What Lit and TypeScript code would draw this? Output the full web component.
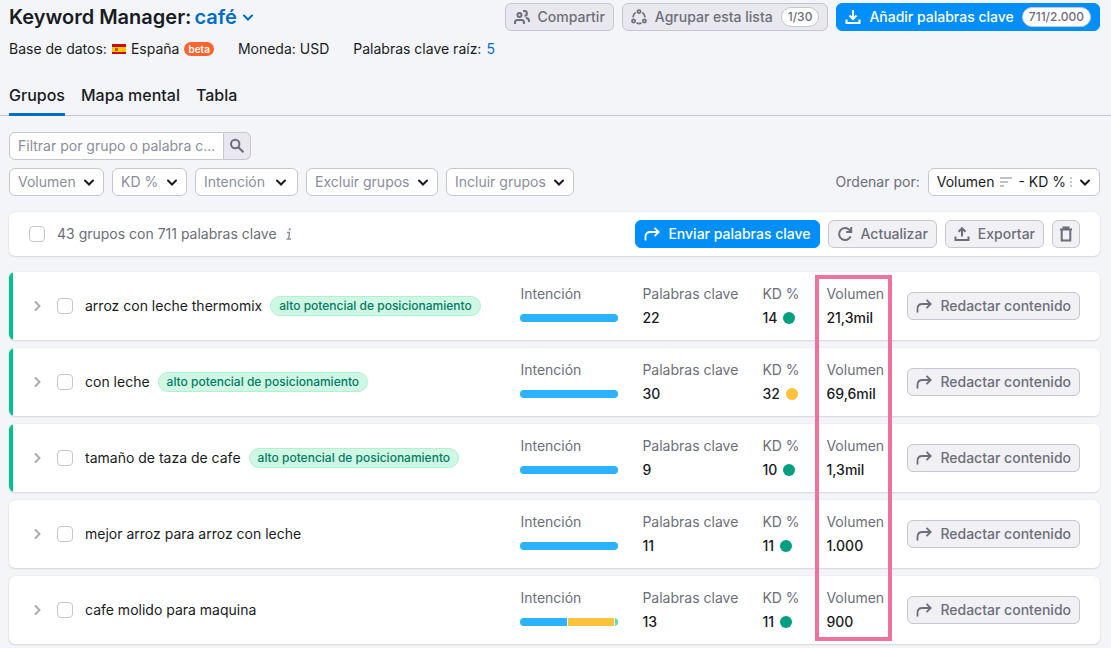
import { LitElement, html, css, svg, nothing } from "lit";
import { customElement, property } from "lit/decorators.js";
import { styleMap } from "lit/directives/style-map.js";

const icons: Record<string, unknown> = {
  share: svg`
    <circle cx="5.500" cy="6" r="2" stroke-width="2"/>
    <path d="M1 15v-1.500c0-1.500 1-2.500 2.500-2.500h4c1.500 0 2.500 1 2.500 2.500V15" stroke-width="2"/>
    <path d="M9 2h1.500a2.300 2.300 0 0 1 0 4.800M11.800 9c2 0 3.200 1.200 3.200 3v1" stroke-width="2"/>`,
  cluster: svg`
    <circle cx="8" cy="2.600" r="1.600" stroke-width="1.700"/>
    <circle cx="2.600" cy="12" r="1.600" stroke-width="1.700"/>
    <circle cx="13.400" cy="12" r="1.600" stroke-width="1.700"/>
    <path d="M4.800 3.400A6 6 0 0 0 2 8.200M11.200 3.400A6 6 0 0 1 14 8.200M5.500 14a6 6 0 0 0 5 0" stroke-width="1.700"/>`,
  download: svg`<path d="M8 1v8.700M4.500 6.500 8 10l3.500-3.500M1.500 10.500V14h13v-3.500" stroke-width="2"/>`,
  upload: svg`<path d="M8 10.500V2.500M4.500 5.700 8 2.200l3.500 3.500M1.500 10.500V14h13v-3.500" stroke-width="2"/>`,
  forward: svg`<path d="M1.500 14.500V11c0-3 2-5 5-5h8M10.500 1.800 14.700 6l-4.200 4.200" stroke-width="1.800"/>`,
  refresh: svg`<path d="M13.600 10.400A6 6 0 1 1 12.400 3.900L14 5.600M14.200 1v5h-5" stroke-width="2"/>`,
  trash: svg`<path d="M2 3.500h12M5.500 3V1.500h5V3M3.700 4v10.500h8.600V4" stroke-width="2"/>`,
  search: svg`<circle cx="6.200" cy="6" r="4.200" stroke-width="2"/><path d="m9.300 9.200 5.200 5" stroke-width="2.200"/>`,
  down: svg`<path d="m4 6.500 4 4 4-4" stroke-width="2" stroke-linecap="round"/>`,
  right: svg`<path d="m6.500 4 4 4-4 4" stroke-width="2" stroke-linecap="round"/>`,
  info: svg`<path d="M6 6.500h2.500L7.500 13M5.500 13H10" stroke-width="1.400"/><circle cx="8.700" cy="3.300" r="1.100" fill="currentColor" stroke="none"/>`,
  sortDesc: svg`<path d="M2 4h12M2 8h8M2 12h4" stroke-width="1.600"/>`,
};

@customElement("ui-icon")
export class UiIcon extends LitElement {
  @property() name = "";

  static styles = css`
    :host { display: inline-flex; flex: none; width: 16px; height: 16px; }
    .glyph { display: block; fill: none; stroke: currentColor; }
  `;

  render() {
    return html`<svg class="glyph" width="16" height="16" viewBox="0 0 16 16" aria-hidden="true">${icons[this.name]}</svg>`;
  }
}

const base = css`
  * { box-sizing: border-box; }
  button, input, select { font: inherit; color: inherit; margin: 0; }
  .btn {
    display: inline-flex; align-items: center; gap: 8px;
    height: 28px; padding: 0 8px;
    border: 1px solid #c4c7cf; border-radius: 6px;
    background: #f1f1f5; color: #6c6e79;
    font-size: 14px; line-height: 20px; font-weight: 500; white-space: nowrap;
  }
  .btn.primary { background: #008ff8; border-color: #008ff8; color: #fff; }
  .btn.muted { background: #e8e8ee; }
  .btn.square { width: 28px; padding: 0; justify-content: center; }
  .count {
    height: 20px; padding: 0 6px; border-radius: 10px;
    border: 1px solid #c4c7cf; background: #fff; color: #6c6e79;
    font-size: 12px; line-height: 18px; font-weight: 500;
  }
  .card {
    background: #fff; border-radius: 6px;
    box-shadow: 0 0 1px rgba(25, 27, 35, 0.16), 0 1px 2px rgba(25, 27, 35, 0.12);
  }
  .check {
    appearance: none; flex: none; width: 16px; height: 16px;
    border: 1px solid #c4c7cf; border-radius: 4px; background: #fff;
  }
`;

type Segment = { color: string; share: number };
type Group = { name: string; high: boolean; words: string; kd: string; dot: string; volume: string; intent: Segment[] };

const BLUE = "#2bb3ff";
const GREEN = "#009f81";
const AMBER = "#fdc23c";
const full: Segment[] = [{ color: BLUE, share: 100 }];

const groups: Group[] = [
  { name: "arroz con leche thermomix", high: true, words: "22", kd: "14", dot: GREEN, volume: "21,3mil", intent: full },
  { name: "con leche", high: true, words: "30", kd: "32", dot: AMBER, volume: "69,6mil", intent: full },
  { name: "tamaño de taza de cafe", high: true, words: "9", kd: "10", dot: GREEN, volume: "1,3mil", intent: full },
  { name: "mejor arroz para arroz con leche", high: false, words: "11", kd: "11", dot: GREEN, volume: "1.000", intent: full },
  {
    name: "cafe molido para maquina", high: false, words: "13", kd: "11", dot: GREEN, volume: "900",
    intent: [{ color: BLUE, share: 48 }, { color: AMBER, share: 48 }, { color: "#59ddaa", share: 4 }],
  },
];

@customElement("group-row")
export class GroupRow extends LitElement {
  @property({ attribute: false }) group!: Group;

  static styles = [base, css`
    :host { display: block; }
    .row {
      display: grid; grid-template-columns: minmax(0, 1fr) 98px 96px 40px 57px auto;
      column-gap: 24px; align-items: center;
      min-height: 68px; padding: 0 20px;
    }
    .row.high { background: linear-gradient(to right, #00c192 4px, #fff 4px); }
    .lead { display: flex; align-items: center; gap: 12px; min-width: 0; }
    .toggle { display: flex; padding: 0; border: 0; background: none; color: #a9abb6; }
    .title { display: flex; align-items: center; gap: 8px; white-space: nowrap; }
    .tag {
      height: 20px; padding: 0 8px; border: 1px solid #b0f0d3; border-radius: 10px;
      background: #cff7e4; color: #007c65; font-size: 12px; line-height: 18px; font-weight: 500;
    }
    .metric { display: grid; row-gap: 4px; white-space: nowrap; }
    .label { color: #6c6e79; }
    .value { display: flex; align-items: center; gap: 6px; height: 20px; font-weight: 500; }
    .bar { display: flex; gap: 1px; flex: 1; height: 8px; border-radius: 4px; overflow: hidden; }
    .dot { width: 12px; height: 12px; border-radius: 50%; }
  `];

  render() {
    const g = this.group;
    return html`
      <div class="card row ${g.high ? "high" : ""}">
        <div class="lead">
          <button class="toggle" aria-label="Desplegar ${g.name}"><ui-icon name="right"></ui-icon></button>
          <input class="check" type="checkbox" id="pick" />
          <div class="title">
            <label for="pick">${g.name}</label>
            ${g.high ? html`<span class="tag">alto potencial de posicionamiento</span>` : nothing}
          </div>
        </div>
        <div class="metric">
          <span class="label">Intención</span>
          <span class="value"><span class="bar">
            ${g.intent.map((s) => html`<span style=${styleMap({ width: `${s.share}%`, background: s.color })}></span>`)}
          </span></span>
        </div>
        <div class="metric"><span class="label">Palabras clave</span><span class="value">${g.words}</span></div>
        <div class="metric">
          <span class="label">KD %</span>
          <span class="value">${g.kd}<span class="dot" style=${styleMap({ background: g.dot })}></span></span>
        </div>
        <div class="metric"><span class="label">Volumen</span><span class="value">${g.volume}</span></div>
        <button class="btn"><ui-icon name="forward"></ui-icon>Redactar contenido</button>
      </div>`;
  }
}

const filters = [
  { label: "Volumen", roomy: false },
  { label: "KD %", roomy: false },
  { label: "Intención", roomy: true },
  { label: "Excluir grupos", roomy: false },
  { label: "Incluir grupos", roomy: false },
];

@customElement("app-root")
export class AppRoot extends LitElement {
  static styles = [base, css`
    :host {
      display: block; box-sizing: border-box; min-height: 100vh; padding: 3px 0 4px;
      background: #f4f5f9; color: #191b23;
      font-family: Inter, "Liberation Sans", sans-serif; font-size: 14px; line-height: 20px;
    }
    .header { display: flex; justify-content: space-between; align-items: center; gap: 16px; padding: 0 11px 0 9px; }
    .heading { display: flex; align-items: center; gap: 3px; margin: 0; font-size: 20px; line-height: 28px; font-weight: 600; white-space: nowrap; }
    .list-name { display: flex; align-items: center; gap: 3px; padding: 0; border: 0; background: none; color: #006dca; }
    .actions { display: flex; gap: 8px; }
    .meta { display: flex; flex-wrap: wrap; gap: 24px; margin-top: 8px; padding: 0 9px; }
    .meta-item { display: flex; align-items: center; gap: 5px; }
    .flag { display: block; }
    .beta { height: 14px; padding: 0 4px; border-radius: 7px; background: #ff642d; color: #fff; font-size: 10px; line-height: 14px; font-weight: 600; }
    .root-link { color: #006dca; text-decoration: none; }
    .tabs { display: flex; gap: 16px; margin-top: 16px; padding: 0 9px; box-shadow: inset 0 -1px #c4c7cf; }
    .tab { padding: 8px 0 6px; border: 0; border-bottom: 3px solid transparent; background: none; font-size: 16px; line-height: 24px; font-weight: 500; }
    .tab.active { border-bottom-color: #006dca; }
    .content { display: grid; row-gap: 16px; padding: 16px 11px 0 9px; }
    .controls { display: grid; row-gap: 8px; }
    .search { display: flex; width: 242px; height: 28px; }
    .search-input {
      flex: 1; min-width: 0; padding: 0 2px 0 8px; border: 1px solid #c4c7cf; border-radius: 6px 0 0 6px;
      background: #fff; text-overflow: ellipsis;
    }
    .search-input::placeholder { color: #8a8e9b; opacity: 1; }
    .search-btn {
      display: flex; align-items: center; justify-content: center; width: 27px; padding: 0;
      border: 1px solid #c4c7cf; border-left: 0; border-radius: 0 6px 6px 0; background: #e8e8ee; color: #6c6e79;
    }
    .line { display: flex; align-items: center; justify-content: space-between; gap: 16px; }
    .filters { display: flex; gap: 8px; }
    .filter { display: grid; align-items: center; }
    .filter > * { grid-area: 1 / 1; }
    .filter-select {
      appearance: none; height: 28px; padding: 0 27px 0 8px; border: 1px solid #c4c7cf; border-radius: 6px;
      background: #fff; color: #8a8e9b;
    }
    .filter.roomy .filter-select { padding-right: 32px; }
    .filter-arrow { justify-self: end; margin-right: 7px; pointer-events: none; }
    .filter.roomy .filter-arrow { margin-right: 9px; }
    .sort { display: flex; align-items: center; gap: 8px; color: #6c6e79; }
    .sort-btn {
      display: flex; align-items: center; gap: 4px; height: 28px; padding: 0 6px 0 8px;
      border: 1px solid #c4c7cf; border-radius: 6px; background: #fff; color: #191b23;
    }
    .sort-icon { color: #a9abb6; }
    .sort-dots { width: 3px; height: 10px; overflow: hidden; border-left: 2px dotted #c4c7cf; }
    .toolbar { display: flex; align-items: center; justify-content: space-between; gap: 16px; padding: 8px 20px; }
    .summary { display: flex; align-items: center; gap: 12px; color: #6c6e79; }
    .summary-text { display: flex; align-items: center; gap: 4px; }
    .info { color: #8a8e9b; }
    .list { position: relative; display: grid; row-gap: 8px; }
    .highlight {
      position: absolute; top: 3px; bottom: 3px; right: 208px; width: 77px;
      border: 4px solid #ee719e; pointer-events: none;
    }
  `];

  render() {
    return html`
      <header class="header">
        <h1 class="heading">
          Keyword Manager:
          <button class="list-name" aria-haspopup="listbox">café<ui-icon name="down"></ui-icon></button>
        </h1>
        <div class="actions">
          <button class="btn muted"><ui-icon name="share"></ui-icon>Compartir</button>
          <button class="btn muted"><ui-icon name="cluster"></ui-icon>Agrupar esta lista<span class="count">1/30</span></button>
          <button class="btn primary"><ui-icon name="download"></ui-icon>Añadir palabras clave<span class="count">711/2.000</span></button>
        </div>
      </header>
      <div class="meta">
        <span class="meta-item">
          Base de datos:
          <svg class="flag" width="14" height="10" viewBox="0 0 14 10" aria-hidden="true">
            <rect width="14" height="10" fill="#c60b1e" />
            <rect y="3" width="14" height="5" fill="#ffc400" />
            <rect x="3" y="4" width="3" height="3" fill="#b5651d" />
          </svg>
          España
          <span class="beta">beta</span>
        </span>
        <span class="meta-item">Moneda: USD</span>
        <span class="meta-item">Palabras clave raíz: <a class="root-link" href="#raiz">5</a></span>
      </div>
      <nav class="tabs" role="tablist">
        <button class="tab active" role="tab" aria-selected="true">Grupos</button>
        <button class="tab" role="tab" aria-selected="false">Mapa mental</button>
        <button class="tab" role="tab" aria-selected="false">Tabla</button>
      </nav>
      <main class="content">
        <div class="controls">
          <div class="search">
            <input class="search-input" type="text" placeholder="Filtrar por grupo o palabra c..." aria-label="Filtrar por grupo o palabra clave" />
            <button class="search-btn" aria-label="Buscar"><ui-icon name="search"></ui-icon></button>
          </div>
          <div class="line">
            <div class="filters">
              ${filters.map((f) => html`
                <span class="filter ${f.roomy ? "roomy" : ""}">
                  <select class="filter-select" aria-label=${f.label}><option>${f.label}</option></select>
                  <ui-icon class="filter-arrow" name="down"></ui-icon>
                </span>`)}
            </div>
            <div class="sort">
              <span id="sort-label">Ordenar por:</span>
              <button class="sort-btn" aria-haspopup="listbox" aria-describedby="sort-label">
                Volumen <ui-icon class="sort-icon" name="sortDesc"></ui-icon> - KD %
                <span class="sort-dots"></span><ui-icon name="down"></ui-icon>
              </button>
            </div>
          </div>
        </div>
        <div class="card toolbar">
          <div class="summary">
            <input class="check" type="checkbox" id="all" />
            <span class="summary-text">
              <label for="all">43 grupos con 711 palabras clave</label>
              <ui-icon class="info" name="info"></ui-icon>
            </span>
          </div>
          <div class="actions">
            <button class="btn primary"><ui-icon name="forward"></ui-icon>Enviar palabras clave</button>
            <button class="btn"><ui-icon name="refresh"></ui-icon>Actualizar</button>
            <button class="btn"><ui-icon name="upload"></ui-icon>Exportar</button>
            <button class="btn square" aria-label="Eliminar"><ui-icon name="trash"></ui-icon></button>
          </div>
        </div>
        <div class="list">
          ${groups.map((g) => html`<group-row .group=${g}></group-row>`)}
          <div class="highlight"></div>
        </div>
      </main>`;
  }
}
